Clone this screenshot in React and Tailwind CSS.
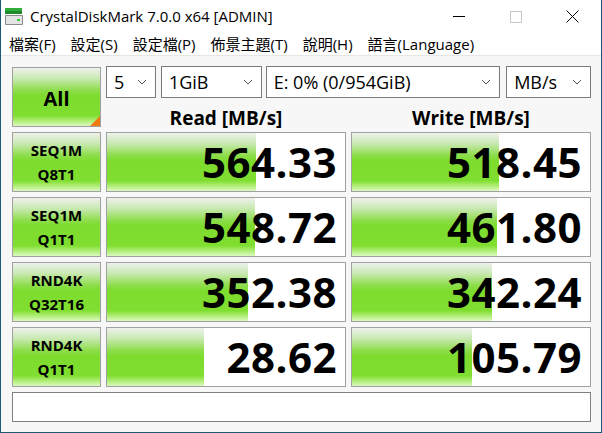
import React from "react"

const FONT = { fontFamily: '"Open Sans","Noto Sans CJK TC",sans-serif' }

const ROWS = [
  { a: "SEQ1M", b: "Q8T1", read: 564.33, write: 518.45 },
  { a: "SEQ1M", b: "Q1T1", read: 548.72, write: 461.8 },
  { a: "RND4K", b: "Q32T16", read: 352.38, write: 342.24 },
  { a: "RND4K", b: "Q1T1", read: 28.62, write: 105.79 },
]

const MENU = ["檔案(F)", "設定(S)", "設定檔(P)", "佈景主題(T)", "說明(H)", "語言(Language)"]

const GREEN =
  "bg-[linear-gradient(to_bottom,#eef1ec_0%,#c9e9b2_18%,#8fdd4e_38%,#7ddc2e_48%,#80de30_82%,#b4ef7c_92%,#dcf9c2_100%)]"

// log scale, same as the app: 10 MB/s -> 1/3, 1000000 -> full
function pct(v) {
  return Math.max(0, Math.min(1, Math.log10(v * 10) / 6)) * 100
}

function Chevron() {
  return (
    <svg width="10" height="6" viewBox="0 0 10 6" className="shrink-0">
      <path d="M1 1 L5 5 L9 1" fill="none" stroke="#555" strokeWidth="1" />
    </svg>
  )
}

function Select({ w, children }) {
  return (
    <div className={`${w} h-[32px] bg-white border border-[#7a7a7a] flex items-center justify-between pl-[7px] pr-[8px] text-[18px] text-black`}>
      <span className="leading-none">{children}</span>
      <Chevron />
    </div>
  )
}

function Score({ value }) {
  return (
    <div className="relative h-[60px] bg-white border border-[#a0a0a0] flex items-center justify-end pr-[8px] overflow-hidden">
      <div className={`absolute left-0 top-0 bottom-0 ${GREEN}`} style={{ width: `${pct(value)}%` }} />
      <span className="relative text-[42px] font-bold leading-none text-black tracking-[0.5px]">
        {value.toFixed(2)}
      </span>
    </div>
  )
}

export default function App() {
  return (
    <div style={FONT} className="w-[602px] h-[433px] bg-white border-x border-b border-[#1d5877] flex flex-col overflow-hidden">
      {/* title bar */}
      <div className="h-[33px] flex items-center shrink-0">
        <svg width="20" height="18" viewBox="0 0 20 18" className="ml-[3px]">
          <rect x="1" y="0" width="17" height="3" fill="#2fae3c" />
          <rect x="1" y="3" width="17" height="3" fill="#1f8a2c" />
          <rect x="1" y="7" width="18" height="10" rx="1" fill="#8c8c8c" />
          <rect x="2" y="8" width="16" height="8" fill="#e4e4e4" />
          <rect x="13" y="11" width="3" height="2" fill="#3cc83c" />
        </svg>
        <span className="ml-[6px] text-[15px] text-black">CrystalDiskMark 7.0.0 x64 [ADMIN]</span>
        <div className="ml-auto flex h-full">
          <div className="w-[57px] flex items-center justify-center">
            <div className="w-[12px] h-px bg-black" />
          </div>
          <div className="w-[57px] flex items-center justify-center">
            <div className="w-[12px] h-[12px] border border-[#c8c8c8]" />
          </div>
          <div className="w-[57px] flex items-center justify-center">
            <svg width="13" height="13" viewBox="0 0 13 13">
              <path d="M0.5 0.5 L12.5 12.5 M12.5 0.5 L0.5 12.5" stroke="#000" strokeWidth="1" />
            </svg>
          </div>
        </div>
      </div>

      {/* menu */}
      <div className="h-[23px] flex items-center gap-[15px] pl-[8px] text-[15px] text-black border-b border-[#e6e6e6] shrink-0">
        {MENU.map((m) => (
          <span key={m}>{m}</span>
        ))}
      </div>

      {/* body */}
      <div className="flex-1 bg-[#f7f7f7] pl-[11px] pr-[10px] pt-[11px]">
        <div className="flex gap-[5px]">
          <div className={`relative w-[89px] h-[60px] border border-[#a0a0a0] ${GREEN} flex items-center justify-center pt-[4px]`}>
            <span className="text-[20px] font-bold text-black">All</span>
            <svg width="10" height="10" viewBox="0 0 10 10" className="absolute right-0 bottom-0">
              <path d="M10 0 L10 10 L0 10 Z" fill="#f07a10" />
            </svg>
          </div>
          <div className="flex flex-col w-[485px] h-[60px] -mt-px">
            <div className="flex">
              <Select w="w-[50px]">5</Select>
              <div className="w-[5px]" />
              <Select w="w-[101px]">1GiB</Select>
              <div className="w-[4px]" />
              <Select w="w-[235px]">E: 0% (0/954GiB)</Select>
              <div className="w-[6px]" />
              <Select w="w-[85px]">MB/s</Select>
            </div>
            <div className="grid grid-cols-2 gap-[5px] h-[28px] pt-[11px] text-center text-[19px] font-bold leading-none text-black">
              <span>Read [MB/s]</span>
              <span>Write [MB/s]</span>
            </div>
          </div>
        </div>

        <div className="grid grid-cols-[89px_240px_240px] gap-[5px] mt-[5px]">
          {ROWS.map((r, i) => (
            <React.Fragment key={i}>
              <div className={`h-[60px] border border-[#a0a0a0] ${GREEN} flex flex-col items-center justify-center gap-[9px] text-[15px] font-bold leading-none text-black`}>
                <span>{r.a}</span>
                <span>{r.b}</span>
              </div>
              <Score value={r.read} />
              <Score value={r.write} />
            </React.Fragment>
          ))}
        </div>

        <div className="mt-[5px] h-[30px] bg-white border border-[#808080]" />
      </div>
    </div>
  )
}
